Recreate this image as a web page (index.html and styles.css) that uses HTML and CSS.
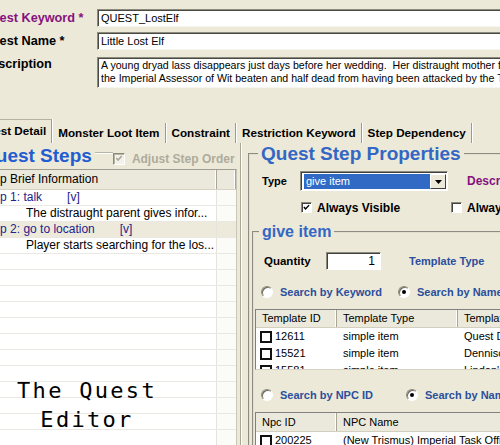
FILE: index.html
```html
<!DOCTYPE html>
<html>
<head>
<meta charset="utf-8">
<link rel="stylesheet" href="styles.css">
</head>
<body>
<div class="window">
  <div class="form">
    <div class="lbl req">Quest Keyword *</div>
    <div class="field">QUEST_LostElf</div>
    <div class="lbl">Quest Name *</div>
    <div class="field">Little Lost Elf</div>
    <div class="lbl lbl-top">Description</div>
    <div class="field area"><div class="ln">A young dryad lass disappears just days before her wedding.  Her distraught mother fears the worst</div><div class="ln">the Imperial Assessor of Wit beaten and half dead from having been attacked by the Trolls</div></div>
  </div>

  <div class="tabs">
    <div class="tab active">Quest Detail</div>
    <div class="tab">Monster Loot Item</div>
    <div class="tab">Constraint</div>
    <div class="tab">Restriction Keyword</div>
    <div class="tab">Step Dependency</div>
  </div>

  <div class="page">
    <div class="left">
      <div class="steps-head">
        <h2 class="steps-title">Quest Steps</h2>
        <span class="gline"></span>
        <div class="chk-dis"><span class="cb cb-dis"><svg viewBox="0 0 11 11" width="11" height="11"><path d="M2.5 5 L4.5 7.2 L8.5 2.8" fill="none" stroke="#aca899" stroke-width="1.8"/></svg></span>Adjust Step Order</div>
      </div>
      <div class="list">
        <div class="list-head"><div class="hc c1">Step Brief Information</div><div class="hc c2"></div></div>
        <div class="row"><div class="c1 step">Step 1: <span class="sname">talk</span><span class="tag">[v]</span></div><div class="c2"></div></div>
        <div class="row"><div class="c1 info">The distraught parent gives infor...</div><div class="c2"></div></div>
        <div class="row sel"><div class="c1 step">Step 2: <span class="sname">go to location</span><span class="tag">[v]</span></div><div class="c2"></div></div>
        <div class="row"><div class="c1 info">Player starts searching for the los...</div><div class="c2"></div></div>
        <div class="row"><div class="c1"></div><div class="c2"></div></div>
        <div class="row"><div class="c1"></div><div class="c2"></div></div>
        <div class="row"><div class="c1"></div><div class="c2"></div></div>
        <div class="row"><div class="c1"></div><div class="c2"></div></div>
        <div class="row"><div class="c1"></div><div class="c2"></div></div>
        <div class="row"><div class="c1"></div><div class="c2"></div></div>
        <div class="row"><div class="c1"></div><div class="c2"></div></div>
        <div class="row"><div class="c1"></div><div class="c2"></div></div>
        <div class="row"><div class="c1"></div><div class="c2"></div></div>
        <div class="row"><div class="c1"></div><div class="c2"></div></div>
        <div class="row"><div class="c1"></div><div class="c2"></div></div>
        <div class="row"><div class="c1"></div><div class="c2"></div></div>
        <div class="row"><div class="c1"></div><div class="c2"></div></div>
      </div>
      <div class="caption">The Quest<br>Editor</div>
    </div>

    <fieldset class="props">
      <legend>Quest Step Properties</legend>
      <div class="type-row">
        <span class="type-lbl">Type</span>
        <div class="select"><span class="sel-val">give item</span><span class="sel-btn"><svg viewBox="0 0 7 4" width="7" height="4"><polygon points="0,0 7,0 3.5,4" fill="#000"/></svg></span></div>
        <span class="desc-lbl">Description</span>
      </div>
      <div class="check-row">
        <div class="chk-item"><span class="cb"><svg viewBox="0 0 11 11" width="11" height="11"><path d="M2.3 4.8 L4.4 7.2 L8.6 2.6" fill="none" stroke="#000" stroke-width="1.8"/></svg></span>Always Visible</div>
        <div class="chk-item"><span class="cb"></span>Always Available</div>
      </div>

      <fieldset class="give">
        <legend>give item</legend>
        <div class="qty-row">
          <span class="qty-lbl">Quantity</span>
          <div class="qty-input">1</div>
          <span class="tt-lbl">Template Type</span>
        </div>
        <div class="radio-row">
          <div class="radio-item r1"><span class="rb"></span>Search by Keyword</div>
          <div class="radio-item"><span class="rb on"></span>Search by Name</div>
        </div>
        <div class="tbl t1">
          <div class="thead"><div class="tc tc1">Template ID</div><div class="tc tc2">Template Type</div><div class="tc tc3">Template Name</div></div>
          <div class="tbody">
            <div class="trow"><div class="tc tc1"><span class="tcb"></span>12611</div><div class="tc tc2">simple item</div><div class="tc tc3">Quest Document</div></div>
            <div class="trow"><div class="tc tc1"><span class="tcb"></span>15521</div><div class="tc tc2">simple item</div><div class="tc tc3">Dennison's Note</div></div>
            <div class="trow"><div class="tc tc1"><span class="tcb"></span>15581</div><div class="tc tc2">simple item</div><div class="tc tc3">Lindon's Letter</div></div>
          </div>
        </div>
        <div class="radio-row r2">
          <div class="radio-item r1b"><span class="rb"></span>Search by NPC ID</div>
          <div class="radio-item"><span class="rb on"></span>Search by Name</div>
        </div>
        <div class="tbl t2">
          <div class="thead"><div class="tc tc1">Npc ID</div><div class="tc tc2w">NPC Name</div></div>
          <div class="tbody">
            <div class="trow"><div class="tc tc1"><span class="tcb"></span>200225</div><div class="tc tc2w">(New Trismus) Imperial Task Officer</div></div>
          </div>
        </div>
      </fieldset>
    </fieldset>
  </div>
</div>
</body>
</html>
```

FILE: styles.css
```css
html, body {
  margin: 0;
  padding: 0;
  background: #ece9d8;
}

.window {
  width: 500px;
  height: 445px;
  overflow: hidden;
  background: #ece9d8;
  font-family: "Liberation Sans", Arial, sans-serif;
  color: #000;
}

/* ---------- top form ---------- */
.form {
  display: grid;
  grid-template-columns: 115px 640px;
  row-gap: 5px;
  margin-left: -18px;
  padding-top: 9px;
  align-items: center;
}

.lbl {
  font-weight: bold;
  font-size: 12.7px;
  line-height: 15px;
}

.lbl.req { color: #86127f; }

.lbl-top {
  align-self: start;
  margin-top: 2px;
}

.field {
  height: 18px;
  box-sizing: border-box;
  background: #fff;
  border: 1px solid;
  border-color: #8c8a7c #f6f5ef #f6f5ef #8c8a7c;
  box-shadow: inset 1px 1px 0 #4a4a44;
  font-size: 11px;
  line-height: 16px;
  padding: 0 3px;
  white-space: pre;
  overflow: hidden;
}

.field.area {
  height: 31px;
  margin-top: 2px;
  padding: 1px 3px;
  font-size: 10.6px;
  line-height: 13px;
}

.ln { white-space: pre; }

/* ---------- tabs ---------- */
.tabs {
  display: flex;
  align-items: flex-end;
  height: 24px;
  margin-top: 31px;
  margin-left: -25px;
}

.tab {
  font-weight: bold;
  font-size: 11.7px;
  height: 20px;
  line-height: 20px;
  padding: 0 5px 0 6px;
  border-right: 1px solid #9d9a88;
  box-shadow: 1px 0 0 #fff;
  white-space: nowrap;
}

.tab.active {
  height: 24px;
  box-sizing: border-box;
  border-top: 1px solid #b5b2a2;
  line-height: 21px;
  padding: 0 5px 0 3px;
}

/* ---------- page ---------- */
.page {
  display: flex;
  align-items: flex-start;
}

.left {
  position: relative;
  width: 264px;
  flex: none;
  margin-left: -24px;
  border-right: 1px solid #a9a695;
  box-shadow: 1px 0 0 #fff;
  height: 310px;
}

.steps-head {
  display: flex;
  align-items: center;
  height: 25px;
  padding-left: 5px;
}

.steps-title {
  margin: 0;
  font-size: 19px;
  line-height: 22px;
  font-weight: bold;
  color: #1f5dd0;
  white-space: nowrap;
}

.gline {
  align-self: flex-start;
  width: 18px;
  margin-top: 9px;
  margin-left: 3px;
  border-top: 1px solid #b8b5a4;
  border-bottom: 1px solid #fff;
}

.chk-dis {
  display: flex;
  align-items: center;
  gap: 7px;
  margin-top: 6px;
  font-weight: bold;
  font-size: 12px;
  color: #aeab9c;
  white-space: nowrap;
}

.cb {
  width: 12px;
  height: 12px;
  box-sizing: border-box;
  flex: none;
  background: #fff;
  border: 1px solid;
  border-color: #8c8a7c #fff #fff #8c8a7c;
  box-shadow: inset 1px 1px 0 #404040;
  display: flex;
  align-items: center;
  justify-content: center;
}

.cb svg { display: block; }

.cb-dis {
  background: #f2f1ea;
  box-shadow: inset 1px 1px 0 #b8b5a4;
}

.list {
  margin-top: 1px;
  width: 260px;
  background: #fff;
  border-top: 1px solid #a09e92;
  border-right: 1px solid #c9c6b8;
  font-size: 12px;
}

.list-head {
  display: flex;
  height: 20px;
  background: #ebe9dc;
  border-bottom: 1px solid #d6d3c4;
  box-sizing: border-box;
}

.hc {
  line-height: 19px;
  border-right: 1px solid #a9a695;
  box-shadow: inset -1px 0 0 #fff;
  white-space: nowrap;
  box-sizing: border-box;
}

.c1 {
  width: 241px;
  flex: none;
  padding-left: 6px;
  box-sizing: border-box;
  white-space: nowrap;
  overflow: hidden;
}

.c2 {
  width: 19px;
  flex: none;
}

.row {
  display: flex;
  height: 16px;
  line-height: 15px;
  box-sizing: border-box;
  border-bottom: 1px solid #e9e8e2;
}

.row .c1 { border-right: 1px solid #e4e3dc; }
.row .c2 { background: #fbfbf7; }

.row.sel { background: #edeadc; }
.row.sel .c2 { background: #edeadc; }

.step { color: #22228c; }
.sname { display: inline-block; }
.tag { margin-left: 25px; }
.info { padding-left: 50px; }

.caption {
  position: absolute;
  left: 40px;
  top: 233px;
  width: 142px;
  text-align: center;
  font-family: "DejaVu Sans Mono", monospace;
  font-size: 22px;
  letter-spacing: 2.3px;
  line-height: 29px;
  color: #000;
}

/* ---------- properties group ---------- */
.props {
  flex: none;
  margin: 0 0 0 7px;
  padding: 0;
  width: 300px;
  height: 420px;
  border: 2px groove #e2dfcf;
  min-width: 0;
}

.props > legend {
  margin-left: 8px;
  padding: 0 3px;
  font-size: 19px;
  line-height: 22px;
  font-weight: bold;
  color: #3467c4;
  white-space: nowrap;
}

.type-row {
  display: flex;
  align-items: center;
  height: 20px;
  margin-top: 6px;
  padding-left: 12px;
}

.type-lbl {
  width: 38px;
  flex: none;
  font-weight: bold;
  font-size: 11px;
}

.select {
  display: flex;
  width: 148px;
  height: 20px;
  flex: none;
  box-sizing: border-box;
  background: #fff;
  border: 1px solid;
  border-color: #8c8a7c #fff #fff #8c8a7c;
  box-shadow: inset 1px 1px 0 #404040;
  padding: 2px 1px 1px 3px;
}

.sel-val {
  flex: 1;
  background: #316ac5;
  color: #fff;
  font-size: 11px;
  line-height: 15px;
  padding-left: 2px;
}

.sel-btn {
  width: 16px;
  flex: none;
  box-sizing: border-box;
  background: #ece9d8;
  border: 1px solid;
  border-color: #fff #404040 #404040 #fff;
  display: flex;
  align-items: center;
  justify-content: center;
}

.sel-btn svg { display: block; }

.desc-lbl {
  margin-left: 19px;
  font-weight: bold;
  font-size: 12px;
  color: #86127f;
  white-space: nowrap;
}

.check-row {
  display: flex;
  align-items: center;
  height: 13px;
  margin-top: 10px;
  padding-left: 51px;
}

.chk-item {
  display: flex;
  align-items: center;
  gap: 5px;
  width: 150px;
  flex: none;
  font-weight: bold;
  font-size: 12px;
  white-space: nowrap;
}

.chk-item .cb { width: 11px; height: 11px; }

/* ---------- give item group ---------- */
.give {
  margin: 8px 0 0 2px;
  padding: 0;
  height: 400px;
  border: 2px groove #e2dfcf;
  min-width: 0;
}

.give > legend {
  margin-left: 5px;
  padding: 0 3px;
  font-size: 16px;
  line-height: 20px;
  font-weight: bold;
  color: #3467c4;
  white-space: nowrap;
}

.qty-row {
  display: flex;
  align-items: center;
  height: 18px;
  margin-top: 10px;
  padding-left: 10px;
}

.qty-lbl {
  width: 62px;
  flex: none;
  font-weight: bold;
  font-size: 11.5px;
}

.qty-input {
  width: 55px;
  height: 18px;
  flex: none;
  box-sizing: border-box;
  background: #fff;
  border: 1px solid;
  border-color: #8c8a7c #fff #fff #8c8a7c;
  box-shadow: inset 1px 1px 0 #404040;
  text-align: right;
  padding-right: 5px;
  font-size: 12px;
  line-height: 17px;
}

.tt-lbl {
  margin-left: 28px;
  font-weight: bold;
  font-size: 11px;
  color: #2b4f9c;
  white-space: nowrap;
}

.radio-row {
  display: flex;
  align-items: center;
  height: 12px;
  margin-top: 16px;
  padding-left: 7px;
}

.radio-row.r2 { margin-top: 19px; }

.radio-item {
  display: flex;
  align-items: center;
  gap: 7px;
  font-weight: bold;
  font-size: 11px;
  color: #2b4f9c;
  white-space: nowrap;
}

.radio-item.r1 { width: 137px; flex: none; }
.radio-item.r1b { width: 145px; flex: none; }

.rb {
  width: 12px;
  height: 12px;
  flex: none;
  box-sizing: border-box;
  border-radius: 50%;
  background: #fff;
  border: 1px solid;
  border-color: #8c8a7c #fff #fff #8c8a7c;
  box-shadow: inset 1px 1px 0 #6a6a60;
  display: flex;
  align-items: center;
  justify-content: center;
}

.rb.on::after {
  content: "";
  width: 4px;
  height: 4px;
  border-radius: 50%;
  background: #000;
}

.tbl {
  margin: 11px 0 0 1px;
  width: 300px;
  background: #fff;
  border: 1px solid;
  border-color: #808080 #d6d3c4 #d6d3c4 #808080;
  font-size: 11px;
}

.thead {
  display: flex;
  height: 18px;
  box-sizing: border-box;
  background: #ebe9dc;
  border-bottom: 1px solid #d2cfbf;
}

.thead .tc {
  line-height: 17px;
  border-right: 1px solid #a9a695;
  box-shadow: inset -1px 0 0 #fff;
}

.tc {
  box-sizing: border-box;
  white-space: nowrap;
  overflow: hidden;
  flex: none;
}

.tc1 { width: 81px; padding-left: 6px; display: flex; align-items: center; }
.tc2 { width: 121px; padding-left: 6px; }
.tc3 { width: 120px; padding-left: 6px; }
.tc2w { width: 240px; padding-left: 6px; }

.tbody {
  height: 41px;
  overflow: hidden;
}

.t2 { margin-top: 11px; }
.t2 .thead { height: 19px; }
.t2 .thead .tc { line-height: 18px; }

.trow {
  display: flex;
  height: 17px;
  line-height: 17px;
}

.trow .tc1 { padding-left: 4px; gap: 3px; }

.tcb {
  width: 12px;
  height: 12px;
  flex: none;
  box-sizing: border-box;
  border: 2px solid #111;
  background: #fff;
}
```
